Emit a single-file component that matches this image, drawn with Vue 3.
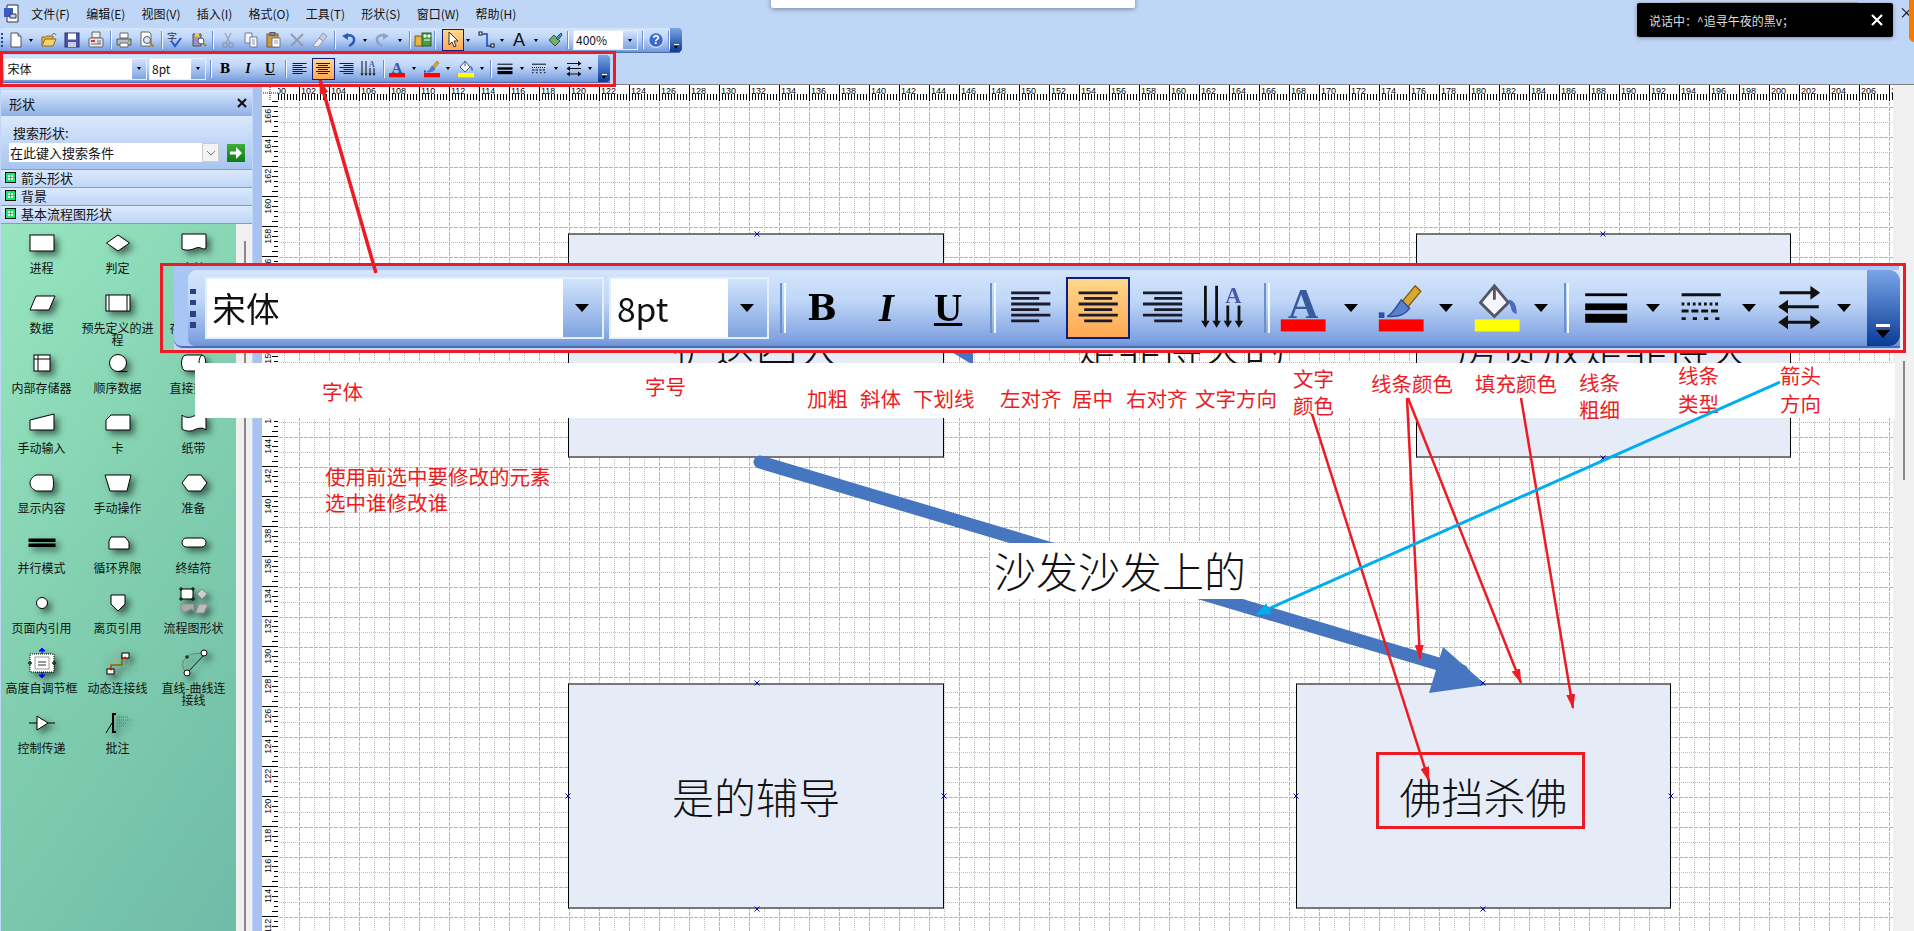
<template>
  <div class="app">
    <!-- shared icon symbols -->
    <svg class="defs" width="0" height="0">
      <defs>
        <symbol id="new" viewBox="0 0 18 18"><path d="M4 2h7l3 3v11H4z" fill="#fff" stroke="#555"/><path d="M11 2v3h3" fill="#ddd" stroke="#555"/></symbol>
        <symbol id="open" viewBox="0 0 18 18"><path d="M2 15V6h4l1-1h6v3" fill="#e8b540" stroke="#8a6a1f"/><path d="M2 15l3-7h11l-3 7z" fill="#f8d26a" stroke="#8a6a1f"/><path d="M12 4c1-2 3-2 4 0" fill="none" stroke="#3a7a2a"/></symbol>
        <symbol id="save" viewBox="0 0 18 18"><rect x="2" y="2" width="14" height="14" fill="#4a55a8" stroke="#2a3070"/><rect x="5" y="2.5" width="8" height="6" fill="#fff"/><rect x="5" y="11" width="8" height="5" fill="#c8cce8"/></symbol>
        <symbol id="perm" viewBox="0 0 18 18"><path d="M5 1h8v6H5z" fill="#eee" stroke="#666"/><rect x="2" y="7" width="14" height="9" rx="1" fill="#e4e4ec" stroke="#666"/><rect x="4" y="9" width="4" height="2" fill="#d33"/><path d="M10 10h4M10 12h4M4 13h10" stroke="#777"/></symbol>
        <symbol id="print" viewBox="0 0 18 18"><path d="M5 2h8v5H5z" fill="#fff" stroke="#666"/><path d="M2 8h14v6H2z" fill="#b8bcc4" stroke="#555"/><path d="M5 12h8v4H5z" fill="#fff" stroke="#666"/><circle cx="14" cy="10" r="1" fill="#3c3"/></symbol>
        <symbol id="preview" viewBox="0 0 18 18"><path d="M3 1h8l2 2v12H3z" fill="#fff" stroke="#666"/><circle cx="9" cy="9" r="3.5" fill="#dbe8fb" stroke="#555"/><path d="M11.5 11.5l4 4" stroke="#b08030" stroke-width="2"/></symbol>
        <symbol id="spell" viewBox="0 0 18 18"><text x="1" y="10" font-size="10" font-family="Noto Sans CJK SC" fill="#333">字</text><path d="M6 11l3 4 6-8" fill="none" stroke="#2a55c0" stroke-width="2"/></symbol>
        <symbol id="research" viewBox="0 0 18 18"><path d="M3 3h8v12H3z" fill="#a090c8" stroke="#554"/><path d="M5 2h4v4H5z" fill="#e8c850"/><circle cx="11" cy="10" r="3" fill="#fff" stroke="#555"/><path d="M13 12l3 3" stroke="#b08030" stroke-width="2"/></symbol>
        <symbol id="cut" viewBox="0 0 18 18" opacity=".6"><path d="M6 2l5 10M12 2L7 12" stroke="#889" stroke-width="1.4"/><circle cx="6" cy="14" r="2.3" fill="none" stroke="#889" stroke-width="1.4"/><circle cx="12" cy="14" r="2.3" fill="none" stroke="#889" stroke-width="1.4"/></symbol>
        <symbol id="copy" viewBox="0 0 18 18"><path d="M3 2h7v10H3z" fill="#f4f6fb" stroke="#6a7a9a"/><path d="M8 6h7v10H8z" fill="#fff" stroke="#6a7a9a"/><path d="M10 9h3M10 11h3M10 13h3" stroke="#89a"/></symbol>
        <symbol id="paste" viewBox="0 0 18 18"><rect x="3" y="3" width="11" height="13" fill="#c89a48" stroke="#7a5a20"/><rect x="6" y="1.500" width="5" height="3" fill="#889" stroke="#556"/><path d="M8 7h8v9H8z" fill="#fff" stroke="#778"/><path d="M10 10h4M10 12h4" stroke="#99a"/></symbol>
        <symbol id="del" viewBox="0 0 18 18"><path d="M3 3l12 12M15 3L3 15" stroke="#8f9bb0" stroke-width="2"/></symbol>
        <symbol id="painter" viewBox="0 0 18 18"><path d="M12 2l4 3-4 5-4-3z" fill="#c6ccd8" stroke="#8f9bb0"/><path d="M8 7l4 3-5 6-5-1z" fill="#e8ebf2" stroke="#8f9bb0"/></symbol>
        <symbol id="undo" viewBox="0 0 18 18"><path d="M6 5c5-2 9 1 8 5-1 3-3 4-5 5" fill="none" stroke="#2a5cb8" stroke-width="2.400"/><path d="M2 5l6-3v7z" fill="#2a5cb8"/></symbol>
        <symbol id="redo" viewBox="0 0 18 18"><path d="M12 5C7 3 3 6 4 10c1 3 3 4 5 5" fill="none" stroke="#8fa3c0" stroke-width="2.400"/><path d="M16 5l-6-3v7z" fill="#8fa3c0"/></symbol>
        <symbol id="shapes" viewBox="0 0 18 18"><path d="M1 15V5h6l1 1h2v9z" fill="#e8b540" stroke="#7a5a20"/><rect x="8" y="2" width="9" height="13" fill="#4a9a4a" stroke="#2a5a2a"/><path d="M10 4h2v2h-2zM14 4h2v2h-2zM10 9h6" stroke="#fff" fill="#cfc"/></symbol>
        <symbol id="pointer" viewBox="0 0 18 18"><path d="M5 1v13l3-3 2 5 2-1-2-5h4z" fill="#fff" stroke="#333"/></symbol>
        <symbol id="connector" viewBox="0 0 18 18"><rect x="1" y="1" width="3" height="3" fill="#fff" stroke="#111"/><path d="M4 3h5v12h4" fill="none" stroke="#1c46c0" stroke-width="1.500"/><rect x="13" y="13" width="3" height="3" fill="#fff" stroke="#111"/></symbol>
        <symbol id="atext" viewBox="0 0 18 18"><text x="9" y="15" text-anchor="middle" font-size="18" font-family="Liberation Sans" fill="#111">A</text></symbol>
        <symbol id="fillshape" viewBox="0 0 18 18"><path d="M9 4l6 6-5 5-6-6z" fill="#72b060" stroke="#445"/><path d="M11 7l5-5 1 2-4 5z" fill="#2aa0c8" stroke="#345"/></symbol>
        <symbol id="help" viewBox="0 0 18 18"><circle cx="9" cy="9" r="7.500" fill="#3a6cd0" stroke="#c8dcf8" stroke-width="1.500"/><text x="9" y="13" text-anchor="middle" font-size="12" font-weight="700" font-family="Liberation Sans" fill="#fff">?</text></symbol>
        <symbol id="alignl" viewBox="0 0 18 18"><path d="M1.500 3.500h14M1.500 5.500h10M1.500 7.500h14M1.500 9.500h10M1.500 11.500h14M1.500 13.500h10" stroke="#1a1a2a"/></symbol>
        <symbol id="alignc" viewBox="0 0 18 18"><path d="M2 3.500h14M4 5.500h10M2 7.500h14M4 9.500h10M2 11.500h14M4 13.500h10" stroke="#1a1a2a"/></symbol>
        <symbol id="alignr" viewBox="0 0 18 18"><path d="M2.500 3.500h14M6.500 5.500h10M2.500 7.500h14M6.500 9.500h10M2.500 11.500h14M6.500 13.500h10" stroke="#1a1a2a"/></symbol>
        <symbol id="textdir" viewBox="0 0 18 18"><path d="M3 1v13M7 1v13M11 8v6M15 8v6" stroke="#111"/><path d="M1.500 13.500h3L3 16zM5.500 13.500h3L7 16zM9.500 13.500h3L11 16zM13.500 13.500h3L15 16z" fill="#111"/><text x="13" y="7" text-anchor="middle" font-size="8" font-weight="700" font-family="Liberation Serif" fill="#4a5aa8">A</text></symbol>
        <symbol id="colora" viewBox="0 0 18 18"><text x="9" y="12.500" text-anchor="middle" font-size="15" font-weight="700" font-family="Liberation Serif" fill="#3a5aa0">A</text><rect x="1" y="13" width="16" height="4.300" fill="#f00"/></symbol>
        <symbol id="pen" viewBox="0 0 18 18"><path d="M14 1l2 2-5 6-2-2z" fill="#d8a830" stroke="#806010" stroke-width=".5"/><path d="M9 6l3 3c-2 3-5 3-8 3 2-1 3-3 5-6z" fill="#5a80d0" stroke="#34508c" stroke-width=".5"/><rect x="1" y="10.500" width="2" height="2" fill="#2a50b0"/><rect x="1" y="13" width="16" height="4.300" fill="#f00"/></symbol>
        <symbol id="bucket" viewBox="0 0 18 18"><path d="M8 1l-5 6 5 5 5-5z" fill="#f4f4fa" stroke="#556"/><path d="M8 1v5" stroke="#556"/><path d="M13 6c2 0 3 2 3 5-1 0-2-1-2-2z" fill="#4a6cc0"/><rect x="1" y="13" width="16" height="4.300" fill="#ff0"/></symbol>
        <symbol id="thick" viewBox="0 0 18 18"><rect x="1.500" y="3.700" width="15" height="1" fill="#000"/><rect x="1.500" y="7.300" width="15" height="2.400" fill="#000"/><rect x="1.500" y="11" width="15" height="3.200" fill="#000"/></symbol>
        <symbol id="dash" viewBox="0 0 18 18"><path d="M2 4.200h14" stroke="#111"/><path d="M2 7.500h14" stroke="#111" stroke-dasharray="1 1"/><path d="M2 10h14" stroke="#111" stroke-dasharray="2.500 1"/><path d="M2 12.700h14" stroke="#111" stroke-dasharray="1.500 2.500"/></symbol>
        <symbol id="arrows" viewBox="0 0 18 18"><path d="M2 3.500h12M2 8.500h14M3 14h12" fill="none" stroke="#111" stroke-width="1.100"/><path d="M13 1l3.500 2.500L13 6zM5 6L1.500 8.500 5 11zM5 11.500L1.500 14 5 16.500zM13 11.500l3.500 2.500-3.500 2.500z" fill="#111"/></symbol>

        <symbol id="s-proc" viewBox="0 0 32 32"><rect x="4" y="8" width="24" height="16"/></symbol>
        <symbol id="s-dec" viewBox="0 0 32 32"><path d="M4.500 16L16 8l11.500 8L16 24z"/></symbol>
        <symbol id="s-doc" viewBox="0 0 32 32"><path d="M4 7h24v14c-3 3-5-2-10 0s-9 3-14 1z"/></symbol>
        <symbol id="s-data" viewBox="0 0 32 32"><path d="M4 23l6-14h19l-6 14z"/></symbol>
        <symbol id="s-predef" viewBox="0 0 32 32"><rect x="4" y="8" width="24" height="16"/><path d="M7 8v16M25 8v16"/></symbol>
        <symbol id="s-int" viewBox="0 0 32 32"><rect x="8" y="8" width="16" height="16"/><path d="M12 8v16M8 12h16"/></symbol>
        <symbol id="s-seq" viewBox="0 0 32 32"><circle cx="16" cy="16" r="8.500"/><path d="M16 24.500h9.500"/></symbol>
        <symbol id="s-direct" viewBox="0 0 32 32"><path d="M8 8h16c5 0 5 16 0 16H8C2 24 2 8 8 8z"/><path d="M24 8c-4 2-4 14 0 16"/></symbol>
        <symbol id="s-minput" viewBox="0 0 32 32"><path d="M4 13L28 7v16H4z"/></symbol>
        <symbol id="s-card" viewBox="0 0 32 32"><path d="M9 8h19v15H4V13z"/></symbol>
        <symbol id="s-tape" viewBox="0 0 32 32"><path d="M4 8c3 3 8 3 12 1s9-2 12 0v14c-3-3-8-2-12 0s-9 1-12-1z"/></symbol>
        <symbol id="s-disp" viewBox="0 0 32 32"><path d="M10 8h16c2 3 2 13 0 16H10C6 22 4 19 4 16s2-6 6-8z"/></symbol>
        <symbol id="s-mop" viewBox="0 0 32 32"><path d="M3 8h26l-4 16H8z"/></symbol>
        <symbol id="s-prep" viewBox="0 0 32 32"><path d="M4 16l6-8h13l6 8-6 8H10z"/></symbol>
        <symbol id="s-par" viewBox="0 0 32 32"><rect x="3" y="12" width="26" height="2.500" fill="#000"/><rect x="3" y="17" width="26" height="2.500" fill="#000"/></symbol>
        <symbol id="s-loop" viewBox="0 0 32 32"><path d="M9 10h14l4 5v7H7v-8z"/></symbol>
        <symbol id="s-term" viewBox="0 0 32 32"><rect x="4" y="11" width="24" height="9" rx="4.500"/></symbol>
        <symbol id="s-pref" viewBox="0 0 32 32"><circle cx="16" cy="16" r="5.500"/></symbol>
        <symbol id="s-opage" viewBox="0 0 32 32"><path d="M9 8h14v9l-7 7-7-7z"/></symbol>
        <symbol id="s-flow" viewBox="0 0 32 32"><rect x="3" y="2" width="12" height="10"/><circle cx="3" cy="2" r="1.200" fill="#2a2"/><circle cx="15" cy="2" r="1.200" fill="#2a2"/><circle cx="3" cy="12" r="1.200" fill="#2a2"/><circle cx="15" cy="12" r="1.200" fill="#2a2"/><path d="M24 2l5 5-5 5-5-5z" fill="#ccc" stroke="#888"/><path d="M3 17h13v7l-3-2-5 3-5-1z" fill="#aaa" stroke="#888"/><path d="M21 17h9l-4 9h-9z" fill="#bbb" stroke="#888"/></symbol>
        <symbol id="s-auto" viewBox="0 0 32 32"><path d="M16 1v30" stroke="#00f"/><path d="M13 4l3-3 3 3zM13 28l3 3 3-3z" fill="#00f" stroke="#00f"/><rect x="4" y="7" width="24" height="18" stroke-dasharray="1 1"/><rect x="9" y="10" width="14" height="12" stroke="#999"/><path d="M12 15h8M12 18h8" stroke="#333"/><circle cx="4" cy="16" r="1.300" fill="#2c2"/><circle cx="28" cy="16" r="1.300" fill="#2c2"/></symbol>
        <symbol id="s-dyn" viewBox="0 0 32 32"><rect x="3" y="7" width="12" height="20" fill="none" stroke="#aaa" stroke-dasharray="1 1"/><rect x="15" y="2" width="12" height="17" fill="none" stroke="#aaa" stroke-dasharray="1 1"/><path d="M9 23v-5h11v-9h3" fill="none" stroke="#860" stroke-width="1.600"/><rect x="5" y="22" width="7" height="5"/><rect x="20" y="6" width="7" height="5"/><circle cx="9" cy="22" r="1" fill="#f00" stroke="#f00"/><circle cx="23" cy="11" r="1" fill="#f00" stroke="#f00"/></symbol>
        <symbol id="s-curve" viewBox="0 0 32 32"><path d="M7 24C1 16 8 8 15 7s8 0 11-1" fill="none" stroke="#777"/><path d="M10 25L26 8" stroke="#111"/><circle cx="26" cy="6" r="3"/><circle cx="9" cy="26" r="3"/><circle cx="9" cy="10" r="1.200" fill="#2c2"/></symbol>
        <symbol id="s-ctrl" viewBox="0 0 32 32"><path d="M3 16h26" stroke="#000"/><path d="M11 9l11 7-11 7z"/></symbol>
        <symbol id="s-note" viewBox="0 0 32 32"><path d="M14 7h-3v18h3" fill="none" stroke="#000" stroke-width="2"/><path d="M10 16l-6 10" stroke="#000"/><path d="M15 10h12M15 13h14M15 16h10M15 19h8" stroke="#666" stroke-dasharray="1 1"/></symbol>
      </defs>
    </svg>

    <!-- menu and toolbars -->
    <div class="chrome">
      <div class="menu">
        <svg class="app-ico" width="19" height="20" viewBox="0 0 19 20">
          <path d="M4 1h11v17H4z" fill="#fff" stroke="#334"/>
          <rect x="1" y="4" width="9" height="9" fill="#3a5cc0"/>
          <path d="M7 10h6v4H7z" fill="#c8d4f0" stroke="#334"/>
        </svg>
        <span v-for="m in menus" :key="m">{{ m }}</span>
      </div>
      <div v-for="bar in bars" :key="bar.cls" class="bar" :class="bar.cls">
        <div
          v-for="it in bar.items"
          :key="it.key"
          class="slot"
          :class="[it.kind, { active: it.active }]"
          :style="it.style"
        >
          <template v-if="it.kind === 'combo'">
            <span class="combo-text">{{ it.text }}</span>
            <span class="combo-btn"><i class="tri"></i></span>
          </template>
          <span v-else-if="it.kind === 'txt'" :class="it.id">{{ it.text }}</span>
          <i v-else-if="it.kind === 'dd'" class="tri"></i>
          <template v-else-if="it.kind === 'grip'">
            <i v-for="n in 4" :key="n"></i>
          </template>
          <svg v-else-if="it.kind === 'ico'" width="18" height="18"><use :href="'#' + it.id" /></svg>
        </div>
        <div class="cap"><i class="cap-line"></i><i class="tri"></i></div>
      </div>
    </div>

    <!-- shapes panel, rulers and page -->
    <div class="main">
      <div class="panel">
        <div class="panel-head">
          <span>形状</span>
          <svg width="10" height="10" viewBox="0 0 10 10"><path d="M1 1l8 8M9 1L1 9" stroke="#111" stroke-width="2.200" /></svg>
        </div>
        <div class="search">
          <div class="search-label">搜索形状:</div>
          <div class="search-row">
            <div class="search-input">在此键入搜索条件</div>
            <div class="search-drop">
              <svg width="10" height="6" viewBox="0 0 10 6"><path d="M1 1l4 4 4-4" fill="none" stroke="#777" /></svg>
            </div>
            <div class="search-go">
              <svg width="18" height="18" viewBox="0 0 18 18"><path d="M3 7.500h6V3l6 6-6 6v-4.500H3z" fill="#fff" /></svg>
            </div>
          </div>
        </div>
        <div v-for="s in stencilRows" :key="s" class="st-row">
          <svg width="11" height="11" viewBox="0 0 11 11">
            <rect x=".5" y=".5" width="10" height="10" fill="#12ec68" stroke="#111" />
            <rect x="3" y="3" width="5" height="5" fill="#fff" />
            <path d="M5.500 3v5M3 5.500h5" stroke="#0a9a48" stroke-width=".7" />
          </svg>
          <span>{{ s }}</span>
        </div>
        <div class="stencil">
          <div class="st-grid">
            <div v-for="item in shapes" :key="item.label" class="st-item">
              <svg class="st-ico" width="32" height="32"><use :href="'#s-' + item.id" /></svg>
              <div class="st-label">{{ item.label }}</div>
            </div>
          </div>
          <div class="st-scroll"><i></i></div>
        </div>
      </div>
      <div class="strip"></div>
      <div class="work">
        <div class="ruler-row">
          <svg class="corner" width="16" height="16" viewBox="0 0 16 16">
            <path d="M1 8h15M8 0v16" stroke="#00c" stroke-dasharray="1 1" />
          </svg>
          <svg class="ruler-top" width="1615" height="16">
            <path :d="topTicks" stroke="#000" shape-rendering="crispEdges" />
            <text v-for="t in topLabels" :key="t.v" :x="t.x" y="9" class="rl">{{ t.v }}</text>
          </svg>
          <div class="scroll-top"></div>
        </div>
        <div class="page-row">
          <svg class="ruler-left" width="16" height="830">
            <path :d="leftTicks" stroke="#000" shape-rendering="crispEdges" />
            <text
              v-for="t in leftLabels"
              :key="t.v"
              class="rl"
              text-anchor="end"
              :transform="`translate(9 ${t.y}) rotate(-90)`"
            >{{ t.v }}</text>
          </svg>
          <svg class="grid" width="1615" height="830">
            <defs>
              <pattern id="cells" x="21" y="36" width="30" height="30" patternUnits="userSpaceOnUse">
                <path d="M15.500 0v30M0 15.500h30" stroke="#bdbdbd" stroke-dasharray="1 1" />
                <path d="M.5 0v30M0 .5h30" stroke="#b4b4b4" stroke-dasharray="4 1" />
              </pattern>
            </defs>
            <rect width="1615" height="830" fill="url(#cells)" />
          </svg>
          <div class="vscroll"><i></i></div>
        </div>
      </div>
    </div>

    <!-- diagram on the page -->
    <div
      v-for="n in nodes"
      :key="n.text"
      class="node"
      :style="{ left: n.x + 'px', top: n.y + 'px', width: n.w + 'px', height: n.h + 'px' }"
    >{{ n.text }}</div>
    <div class="edge-text">是非得失的</div>
    <svg class="connectors" width="1914" height="931">
      <path d="M973 325v40L945 348z" fill="#4776c0" />
      <path d="M760 462L1462 671" stroke="#4776c0" stroke-width="13" stroke-linecap="round" />
      <path d="M1443 647L1486 685 1429 693z" fill="#4776c0" />
      <path v-for="h in handles" :key="h" :d="h" stroke="#00c" />
    </svg>
    <div class="edge-label">沙发沙发上的</div>

    <!-- annotations laid over the screenshot -->
    <div class="redbox small"></div>
    <div class="redbox focus"></div>
    <div class="band"></div>
    <div class="big-back"></div>
    <div class="redbox big"></div>
    <div
      v-for="(note, i) in notes"
      :key="i"
      class="note"
      :style="{ left: note.x + 'px', top: note.y - 14 + 'px' }"
    >{{ note.text }}</div>
    <svg class="arrows" width="1914" height="931">
      <defs>
        <marker id="rh" markerUnits="userSpaceOnUse" markerWidth="15" markerHeight="9" refX="14" refY="4.500" orient="auto">
          <path d="M0 0l15 4.500L0 9z" fill="#ed1c24" />
        </marker>
        <marker id="bh" markerUnits="userSpaceOnUse" markerWidth="14" markerHeight="12" refX="13" refY="6" orient="auto">
          <path d="M0 0l14 6L0 12z" fill="#00aeef" />
        </marker>
      </defs>
      <line x1="376" y1="273" x2="320" y2="80" stroke="#ed1c24" stroke-width="3.500" marker-end="url(#rh)" />
      <line x1="1312" y1="414" x2="1429" y2="781" stroke="#ed1c24" stroke-width="2.500" marker-end="url(#rh)" />
      <line x1="1407" y1="398" x2="1420" y2="659" stroke="#ed1c24" stroke-width="2.500" marker-end="url(#rh)" />
      <line x1="1408" y1="398" x2="1521" y2="683" stroke="#ed1c24" stroke-width="2.500" marker-end="url(#rh)" />
      <line x1="1521" y1="398" x2="1573" y2="708" stroke="#ed1c24" stroke-width="2.500" marker-end="url(#rh)" />
      <line x1="1780" y1="382" x2="1257" y2="614" stroke="#00aeef" stroke-width="3" marker-end="url(#bh)" />
    </svg>

    <!-- overlays from the desktop -->
    <div class="popup"></div>
    <div class="toast-shade"></div>
    <div class="toast">
      <span>说话中：^追寻午夜的黑v；</span>
      <svg width="12" height="12" viewBox="0 0 12 12"><path d="M1 1l10 10M11 1L1 11" stroke="#fff" stroke-width="2.200" /></svg>
    </div>
    <div class="mini-x">×</div>
    <div class="orange"></div>
  </div>
</template>

<script setup>
import { computed } from 'vue'

const menus = ['文件(F)', '编辑(E)', '视图(V)', '插入(I)', '格式(O)', '工具(T)', '形状(S)', '窗口(W)', '帮助(H)']
const stencilRows = ['箭头形状', '背景', '基本流程图形状']

const shapes = [
  { id: 'proc', label: '进程' }, { id: 'dec', label: '判定' }, { id: 'doc', label: '文档' },
  { id: 'data', label: '数据' }, { id: 'predef', label: '预先定义的进程' }, { id: 'doc', label: '存储数据' },
  { id: 'int', label: '内部存储器' }, { id: 'seq', label: '顺序数据' }, { id: 'direct', label: '直接数据' },
  { id: 'minput', label: '手动输入' }, { id: 'card', label: '卡' }, { id: 'tape', label: '纸带' },
  { id: 'disp', label: '显示内容' }, { id: 'mop', label: '手动操作' }, { id: 'prep', label: '准备' },
  { id: 'par', label: '并行模式' }, { id: 'loop', label: '循环界限' }, { id: 'term', label: '终结符' },
  { id: 'pref', label: '页面内引用' }, { id: 'opage', label: '离页引用' }, { id: 'flow', label: '流程图形状' },
  { id: 'auto', label: '高度自调节框' }, { id: 'dyn', label: '动态连接线' }, { id: 'curve', label: '直线-曲线连接线' },
  { id: 'ctrl', label: '控制传递' }, { id: 'note', label: '批注' }
]

// items carry the centre x of the slot, margins are worked out from it
const kindWidth = { sep: 2, dd: 8, grip: 3, ico: 18, txt: 18 }

function place(list) {
  let end = 0
  return list.map((it, i) => {
    const kind = it.kind || (it.id === 'sep' ? 'sep' : it.id === 'dd' ? 'dd' : it.id === 'grip' ? 'grip' : 'ico')
    const w = it.w || kindWidth[kind]
    const margin = it.c - w / 2 - end
    end = it.c + w / 2
    return { ...it, kind, key: i, style: { width: w + 'px', marginLeft: margin + 'px' } }
  })
}

const mainItems = [
  ['grip', 1.5], ['new', 16], ['dd', 31], ['open', 49], ['save', 72], ['perm', 96], ['sep', 111], ['print', 124],
  ['preview', 147], ['sep', 162], ['spell', 175], ['research', 199], ['sep', 213], ['cut', 228], ['copy', 251],
  ['paste', 273], ['del', 297], ['painter', 320], ['sep', 335], ['undo', 349], ['dd', 365], ['redo', 382],
  ['dd', 400], ['sep', 410], ['shapes', 423], ['sep', 435]
].map(([id, c]) => ({ id, c }))

const mainEnd = [
  { id: 'pointer', c: 452.5, w: 22, active: true }, { id: 'dd', c: 468 }, { id: 'connector', c: 487 },
  { id: 'dd', c: 502 }, { id: 'atext', c: 519 }, { id: 'dd', c: 536 }, { id: 'fillshape', c: 554 },
  { id: 'sep', c: 568 }, { id: 'zoom', kind: 'combo', c: 605.5, w: 65, text: '400%' }, { id: 'sep', c: 643 },
  { id: 'help', c: 656 }, { id: 'sep', c: 669 }
]

const formatItems = [
  { id: 'grip', c: 6.8 },
  { id: 'font', kind: 'combo', c: 82.25, w: 142.5, text: '宋体' },
  { id: 'size', kind: 'combo', c: 184, w: 57, text: '8pt' },
  { id: 'sep', c: 217.5 },
  { id: 'bold', kind: 'txt', c: 231.5, text: 'B' },
  { id: 'ital', kind: 'txt', c: 254.5, text: 'I' },
  { id: 'under', kind: 'txt', c: 276.5, text: 'U' },
  { id: 'sep', c: 292.5 },
  { id: 'alignl', c: 306.5 },
  { id: 'alignc', c: 330, w: 23, active: true },
  { id: 'alignr', c: 352.5 },
  { id: 'textdir', c: 374.5 },
  { id: 'sep', c: 390.5 },
  { id: 'colora', c: 403.5 },
  { id: 'dd', c: 420.5 },
  { id: 'pen', c: 438.5 },
  { id: 'dd', c: 454.5 },
  { id: 'bucket', c: 472.5 },
  { id: 'dd', c: 488.5 },
  { id: 'sep', c: 497.5 },
  { id: 'thick', c: 511.5 },
  { id: 'dd', c: 528.5 },
  { id: 'dash', c: 545.5 },
  { id: 'dd', c: 562.5 },
  { id: 'arrows', c: 580.5 },
  { id: 'dd', c: 596.5 }
]

const formatPlaced = place(formatItems)
const bars = [
  { cls: 'bar-main', items: place([...mainItems, ...mainEnd]) },
  { cls: 'bar-fmt', items: formatPlaced },
  { cls: 'bar-big', items: formatPlaced }
]

// rulers: 30px for two units, page x starts at 278 and y at 101
const topLabels = computed(() => {
  const out = []
  for (let v = 100; v <= 208; v += 2) out.push({ v, x: 269 + (v - 100) * 15 - 278 + 2 })
  return out
})
const topTicks = computed(() => {
  let d = ''
  for (let x = 0.5; x < 1615; x += 3) d += `M${x} 9v6`
  for (const t of topLabels.value) d += `M${t.x - 1.5} 0v16`
  return d
})
const leftLabels = computed(() => {
  const out = []
  for (let v = 166; v >= 110; v -= 2) out.push({ v, y: 136.7 + (164 - v) * 15 - 101 + 2 })
  return out
})
const leftTicks = computed(() => {
  let d = ''
  for (let y = 0.5; y < 830; y += 5) d += `M${(y % 15) < 5 ? 10 : 12} ${y}h6`
  for (const t of leftLabels.value) d += `M0 ${t.y - 2.2}h16`
  return d
})

const nodes = [
  { x: 568, y: 233, w: 376, h: 225, text: '护送四大' },
  { x: 1416, y: 233, w: 375, h: 225, text: '房贷放是非得失' },
  { x: 568, y: 683, w: 376, h: 226, text: '是的辅导' },
  { x: 1296, y: 683, w: 375, h: 226, text: '佛挡杀佛' }
]

const handles = [
  [757, 234], [1603, 234], [1603, 458], [757, 683], [568, 796], [944, 796], [757, 909],
  [1483, 683], [1296, 796], [1671, 796], [1483, 909]
].map(([x, y]) => `M${x - 2.5} ${y - 2.5}l5 5m0-5l-5 5`)

const notes = [
  { text: '字体', x: 322, y: 391 },
  { text: '字号', x: 645, y: 386 },
  { text: '加粗', x: 807, y: 398 },
  { text: '斜体', x: 860, y: 398 },
  { text: '下划线', x: 913, y: 398 },
  { text: '左对齐', x: 1000, y: 398 },
  { text: '居中', x: 1072, y: 398 },
  { text: '右对齐', x: 1126, y: 398 },
  { text: '文字方向', x: 1195, y: 398 },
  { text: '文字', x: 1293, y: 378 },
  { text: '颜色', x: 1293, y: 405 },
  { text: '线条颜色', x: 1371, y: 383 },
  { text: '填充颜色', x: 1475, y: 383 },
  { text: '线条', x: 1579, y: 382 },
  { text: '粗细', x: 1579, y: 409 },
  { text: '线条', x: 1678, y: 375 },
  { text: '类型', x: 1678, y: 403 },
  { text: '箭头', x: 1780, y: 375 },
  { text: '方向', x: 1780, y: 403 },
  { text: '使用前选中要修改的元素', x: 325, y: 476 },
  { text: '选中谁修改谁', x: 325, y: 502 }
]
</script>

<style>
html,
body {
  margin: 0;
  padding: 0;
  overflow: hidden;
}
</style>

<style scoped>
.app {
  position: relative;
  width: 1914px;
  height: 931px;
  overflow: hidden;
  background: #c0d6f7;
  font-family: "Noto Sans CJK SC", "Liberation Sans", sans-serif;
  font-size: 12px;
  color: #111;
}
.defs {
  position: absolute;
}

/* menu + toolbars */
.chrome {
  height: 84px;
  overflow: hidden;
}
.menu {
  display: flex;
  align-items: center;
  gap: 16.2px;
  height: 28px;
  padding-left: 3px;
  line-height: 14px;
  white-space: nowrap;
}
.app-ico {
  margin-right: -7px;
}
.bar {
  display: flex;
  align-items: center;
  background: linear-gradient(#d4e5fb 0, #c0d7f8 40%, #7fa2e0 92%, #6c91d6 100%);
  border-bottom: 1px solid #4a6eb0;
  box-sizing: border-box;
  border-radius: 3px 0 0 3px;
}
.bar-main {
  width: 680px;
  height: 25px;
}
.bar-fmt {
  width: 616.5px;
  height: 28px;
  margin-top: 2px;
  margin-left: -6.5px;
}
.bar-big {
  position: absolute;
  left: 62.14px;
  top: 96.43px;
  z-index: 6;
  width: 616.5px;
  height: 28px;
  zoom: 2.8;
  filter: blur(0.2px);
  box-shadow: inset 5px 0 0 #a8c6f5;
}
.slot {
  display: flex;
  flex: none;
  align-items: center;
  justify-content: center;
  height: 20px;
  box-sizing: border-box;
}
.slot.sep {
  height: 18px;
  border-left: 1px solid #6d8fd0;
  border-right: 1px solid #f4f8ff;
}
.slot.grip {
  flex-direction: column;
  justify-content: space-between;
  height: 14px;
}
.slot.grip i {
  display: block;
  width: 2px;
  height: 2px;
  background: #27418a;
}
.slot.active {
  height: 22px;
  background: linear-gradient(#ffd88c, #ffa852);
  border: 1px solid #0a1f80;
}
.slot.combo {
  justify-content: space-between;
  height: 22px;
  background: #fff;
  border: 1px solid #e4eefc;
}
.bar-main .slot.combo {
  height: 20px;
}
.combo-text {
  padding-left: 2px;
  font-size: 12px;
  line-height: 20px;
}
.combo-btn {
  display: flex;
  align-items: center;
  justify-content: center;
  align-self: stretch;
  width: 14px;
  background: linear-gradient(#d2e4fc, #7fa3e0);
}
.tri {
  display: block;
  width: 0;
  height: 0;
  border-left: 2.5px solid transparent;
  border-right: 2.5px solid transparent;
  border-top: 3px solid #000;
}
.bold,
.ital,
.under {
  font-family: "Liberation Serif", serif;
  font-size: 14px;
  line-height: 18px;
  color: #000;
}
.bold {
  font-family: "DejaVu Serif", serif;
  font-size: 12.5px;
  font-weight: 700;
}
.ital {
  font-style: italic;
  font-weight: 700;
}
.under {
  font-weight: 700;
  text-decoration: underline;
}
.cap {
  display: flex;
  flex: none;
  flex-direction: column;
  align-items: center;
  justify-content: flex-end;
  align-self: stretch;
  gap: 1px;
  width: 12px;
  margin-left: auto;
  padding-bottom: 3px;
  box-sizing: border-box;
  background: linear-gradient(#7aa4e8, #0a3c96);
  border-radius: 0 4px 4px 0;
}
.cap-line {
  display: block;
  width: 5px;
  height: 1px;
  background: #fff;
}

/* left panel */
.main {
  display: flex;
  height: 847px;
}
.panel {
  display: flex;
  flex-direction: column;
  flex: none;
  width: 253px;
  padding: 6px 1px 0;
  box-sizing: border-box;
}
.panel-head {
  display: flex;
  align-items: center;
  justify-content: space-between;
  flex: none;
  height: 26px;
  padding: 0 5px 0 8px;
  background: linear-gradient(#d8e8fc, #8fb0e8);
  font-size: 13px;
}
.search {
  flex: none;
  height: 53px;
  padding: 9px 0 0 8px;
  box-sizing: border-box;
  background: linear-gradient(#dbe9fc, #a8c4f0);
  font-size: 13px;
}
.search-label {
  padding-left: 4px;
  line-height: 16px;
}
.search-row {
  display: flex;
  align-items: center;
  margin-top: 2px;
}
.search-input {
  width: 193px;
  height: 19px;
  padding-left: 1px;
  background: #fff;
  line-height: 19px;
  box-sizing: border-box;
}
.search-drop {
  display: flex;
  align-items: center;
  justify-content: center;
  width: 17px;
  height: 19px;
  background: #f4f4f4;
  border: 1px solid #ccc;
  box-sizing: border-box;
}
.search-go {
  display: flex;
  align-items: center;
  justify-content: center;
  width: 18px;
  height: 18px;
  margin-left: 8px;
  background: linear-gradient(#3fae3a, #0d7c12);
}
.st-row {
  display: flex;
  align-items: center;
  gap: 5px;
  flex: none;
  height: 18px;
  padding: 0 0 2px 4px;
  box-sizing: border-box;
  background: linear-gradient(#dbe9fc, #bfd6f7);
  border-top: 1px solid #7c9cd8;
  font-size: 13px;
  line-height: 16px;
}
.stencil {
  display: flex;
  flex: 1;
  min-height: 0;
  border-top: 1px solid #7c9cd8;
}
.st-grid {
  display: grid;
  grid-template-columns: repeat(3, 76px);
  grid-auto-rows: 60px;
  align-content: start;
  width: 235px;
  padding-left: 2.5px;
  box-sizing: border-box;
  background: linear-gradient(125deg, #98e6c0 0, #82d0b0 45%, #6fbba8 100%);
}
.st-item {
  display: flex;
  flex-direction: column;
  align-items: center;
  padding-top: 3px;
  box-sizing: border-box;
}
.st-ico {
  flex: none;
  fill: #fff;
  stroke: #000;
  filter: drop-shadow(4px 4px 3px rgba(0, 0, 0, 0.5));
}
.st-label {
  width: 74px;
  margin-top: 3px;
  line-height: 12px;
  text-align: center;
  word-break: break-all;
}
.st-scroll {
  flex: 1;
  position: relative;
  background: #f0f0f0;
}
.st-scroll i {
  position: absolute;
  left: 8px;
  top: 17px;
  bottom: 0;
  width: 2px;
  background: #888;
}
.strip {
  flex: none;
  width: 9px;
  background: #a9c2ef;
}

/* rulers + page */
.work {
  display: flex;
  flex-direction: column;
  flex: 1;
  min-width: 0;
  background: #fff;
}
.ruler-row {
  display: flex;
  flex: none;
  height: 17px;
  border-top: 1px solid #808080;
  box-sizing: border-box;
}
.corner,
.ruler-top,
.ruler-left,
.grid {
  display: block;
  flex: none;
}
.scroll-top {
  flex: 1;
  background: #f0f0f0;
}
.rl {
  font-family: "Liberation Sans", sans-serif;
  font-size: 9px;
  fill: #000;
  stroke: none;
}
.page-row {
  display: flex;
  flex: 1;
  min-height: 0;
}
.vscroll {
  flex: 1;
  position: relative;
  background: #f0f0f0;
}
.vscroll i {
  position: absolute;
  left: 10px;
  top: 260px;
  width: 2px;
  height: 119px;
  background: #888;
}

/* diagram */
.node {
  position: absolute;
  display: flex;
  align-items: center;
  justify-content: center;
  box-sizing: border-box;
  background: #e6ecf7;
  border-left: 1px solid #000;
  border-right: 1px solid #000;
  border-top: 2px solid #777;
  border-bottom: 2px solid #777;
  font-size: 42px;
  font-weight: 300;
  line-height: 48px;
  white-space: nowrap;
}
.edge-text {
  position: absolute;
  left: 1076px;
  top: 321px;
  font-size: 42px;
  font-weight: 300;
  line-height: 48px;
  white-space: nowrap;
}
.connectors {
  position: absolute;
  left: 0;
  top: 0;
}
.edge-label {
  position: absolute;
  left: 990px;
  top: 543px;
  width: 260px;
  height: 56px;
  background: #fff;
  font-size: 42px;
  font-weight: 300;
  line-height: 54px;
  text-align: center;
  white-space: nowrap;
}

/* annotations */
.band {
  position: absolute;
  left: 195px;
  top: 363px;
  width: 1700px;
  height: 55px;
  background: #fff;
}
.big-back {
  position: absolute;
  left: 174px;
  top: 266px;
  width: 1725px;
  height: 87px;
  background: linear-gradient(#a9c6f4, #c3d9f8);
}
.redbox {
  position: absolute;
  box-sizing: border-box;
  border: 3px solid #ed1c24;
}
.redbox.small {
  left: 0;
  top: 51px;
  width: 616px;
  height: 36px;
}
.redbox.big {
  left: 160px;
  top: 263px;
  width: 1746px;
  height: 90px;
  border-width: 3.5px;
}
.redbox.focus {
  left: 1376px;
  top: 752px;
  width: 209px;
  height: 77px;
}
.note {
  position: absolute;
  font-size: 20.5px;
  line-height: 28px;
  color: #ed1c24;
  white-space: nowrap;
}
.arrows {
  position: absolute;
  left: 0;
  top: 0;
  z-index: 7;
  pointer-events: none;
}

/* desktop overlays */
.popup {
  position: absolute;
  left: 771px;
  top: -4px;
  width: 364px;
  height: 12px;
  background: #fff;
  box-shadow: 0 1px 5px rgba(0, 0, 0, 0.4);
  border-radius: 2px;
}
.toast-shade {
  position: absolute;
  left: 1680px;
  top: 2px;
  width: 178px;
  height: 2px;
  background: #aaa;
}
.toast {
  position: absolute;
  left: 1637px;
  top: 3px;
  display: flex;
  align-items: center;
  justify-content: space-between;
  width: 256px;
  height: 34px;
  padding: 0 10px 0 12px;
  box-sizing: border-box;
  background: #000;
  border-radius: 2px;
  box-shadow: 0 1px 4px rgba(0, 0, 0, 0.35);
  color: #ddd;
  font-size: 12px;
}
.mini-x {
  position: absolute;
  left: 1899px;
  top: 3px;
  font-size: 15px;
  line-height: 18px;
  color: #000;
}
.orange {
  position: absolute;
  left: 1909px;
  top: 0;
  width: 5px;
  height: 42px;
  background: #f57c00;
  border-radius: 0 0 0 5px;
}
</style>
